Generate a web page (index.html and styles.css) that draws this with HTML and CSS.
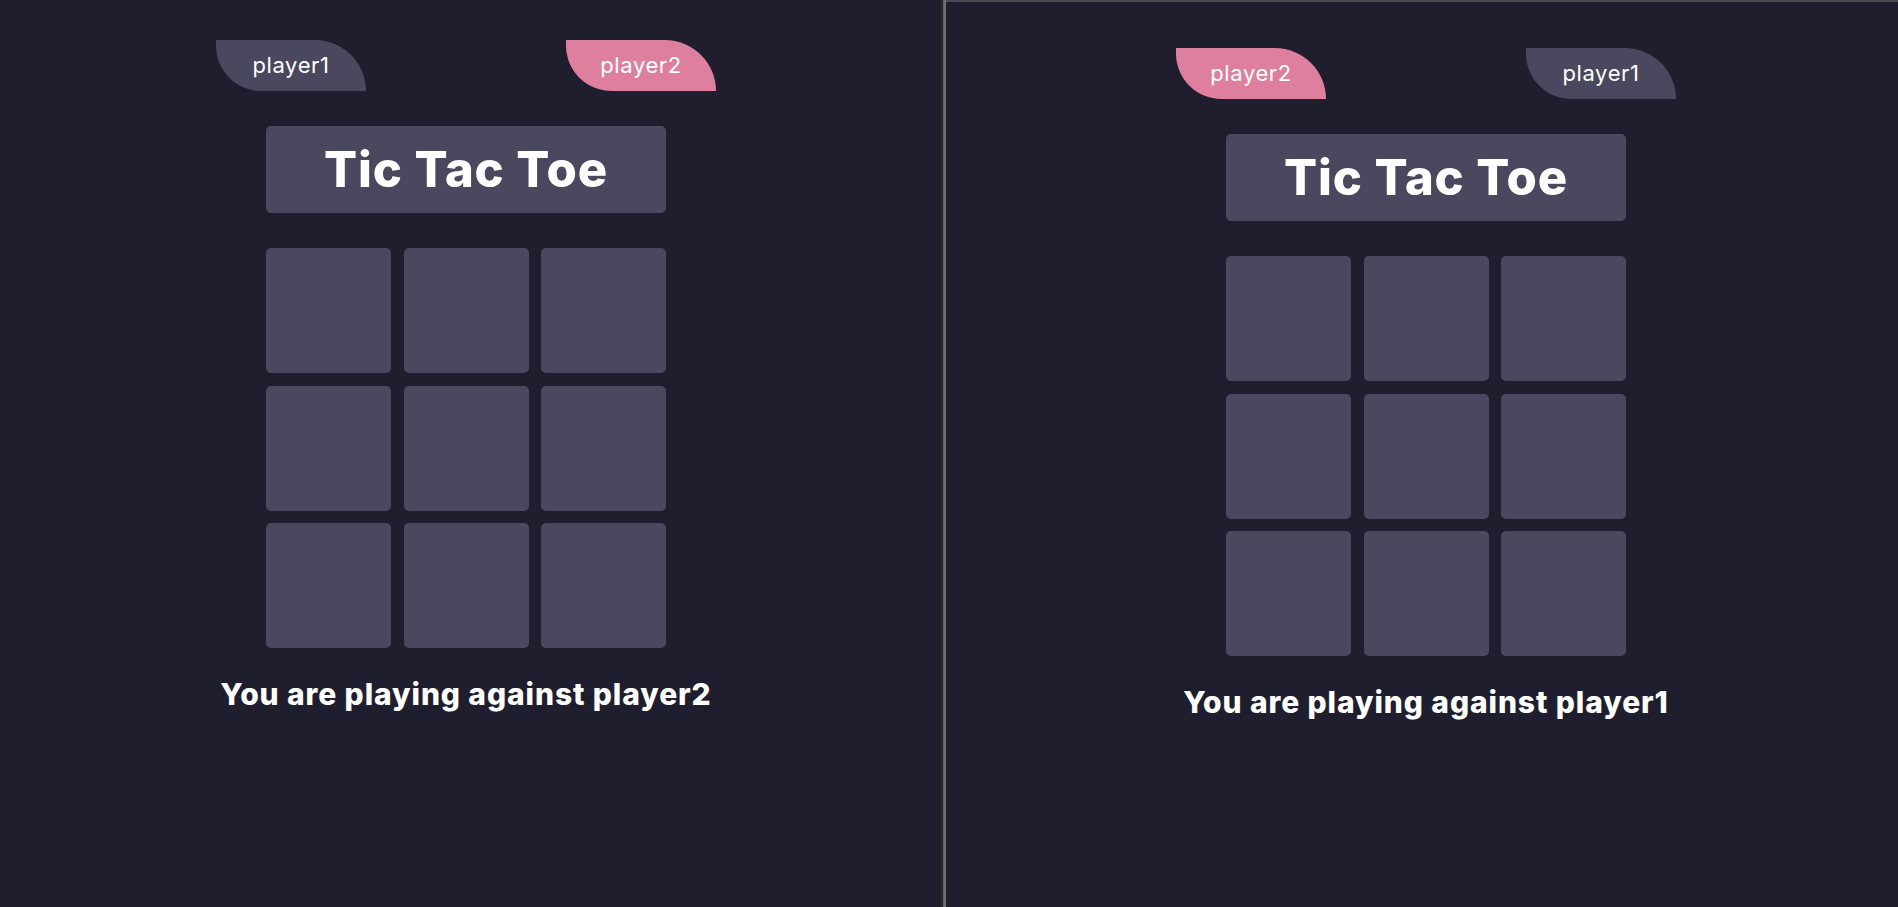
FILE: index.html
```html
<!DOCTYPE html>
<html lang="en">
<head>
<meta charset="utf-8">
<title>Tic Tac Toe</title>
<link rel="stylesheet" href="styles.css">
</head>
<body>
<div class="screen">
  <main class="pane pane-left">
    <div class="players">
      <div class="badge">player1</div>
      <div class="badge badge-active">player2</div>
    </div>
    <h1 class="title">Tic Tac Toe</h1>
    <div class="board">
      <div class="cell"></div><div class="cell"></div><div class="cell"></div>
      <div class="cell"></div><div class="cell"></div><div class="cell"></div>
      <div class="cell"></div><div class="cell"></div><div class="cell"></div>
    </div>
    <h2 class="status">You are playing against player2</h2>
  </main>
  <div class="divider"><span class="shade"></span><span class="edge"></span></div>
  <main class="pane pane-right">
    <div class="players">
      <div class="badge badge-active">player2</div>
      <div class="badge">player1</div>
    </div>
    <h1 class="title">Tic Tac Toe</h1>
    <div class="board">
      <div class="cell"></div><div class="cell"></div><div class="cell"></div>
      <div class="cell"></div><div class="cell"></div><div class="cell"></div>
      <div class="cell"></div><div class="cell"></div><div class="cell"></div>
    </div>
    <h2 class="status">You are playing against player1</h2>
  </main>
</div>
</body>
</html>
```

FILE: styles.css
```css
* { box-sizing: border-box; }
html, body {
  margin: 0;
  padding: 0;
  height: 100%;
  background: #1f1e2e;
  font-family: "Inter", "Liberation Sans", sans-serif;
  color: #ffffff;
  overflow: hidden;
}
.screen {
  display: flex;
  height: 907px;
}
.pane {
  display: flex;
  flex-direction: column;
  align-items: center;
  background: #1f1e2e;
}
.pane-left {
  width: 939px;
  flex: none;
  padding-top: 40px;
  padding-right: 7px;
}
.pane-right {
  flex: 1;
  border-top: 2px solid #4a4a4e;
  padding-top: 46px;
  padding-left: 8px;
}
.divider {
  width: 7px;
  flex: none;
  display: flex;
}
.shade {
  width: 4px;
  background: linear-gradient(to right, #1a1a25, #2c2c30);
}
.edge {
  width: 3px;
  background: linear-gradient(to right, #5a5a5c, #7a7a7c);
}
.players {
  width: 500px;
  display: flex;
  justify-content: space-between;
}
.badge {
  width: 150px;
  height: 51px;
  background: #4a485e;
  border-radius: 0 56px 0 50px;
  display: flex;
  align-items: center;
  justify-content: center;
  font-size: 22px;
  font-weight: 400;
  letter-spacing: 0.6px;
  color: #ffffff;
  padding-bottom: 2px;
}
.badge-active {
  background: #de7f9d;
}
.title {
  margin: 35px 0 0;
  width: 400px;
  height: 87px;
  background: #4a485e;
  border-radius: 5px;
  display: flex;
  align-items: center;
  justify-content: center;
  font-size: 49px;
  font-weight: 800;
  letter-spacing: 0.9px;
}
.board {
  margin-top: 35px;
  display: grid;
  grid-template-columns: repeat(3, 125px);
  grid-auto-rows: 125px;
  gap: 12.5px;
}
.cell {
  background: #4a485e;
  border-radius: 5px;
}
.status {
  margin: 28px 0 0;
  font-size: 30px;
  line-height: 36px;
  font-weight: 800;
  letter-spacing: 0.9px;
}
```
